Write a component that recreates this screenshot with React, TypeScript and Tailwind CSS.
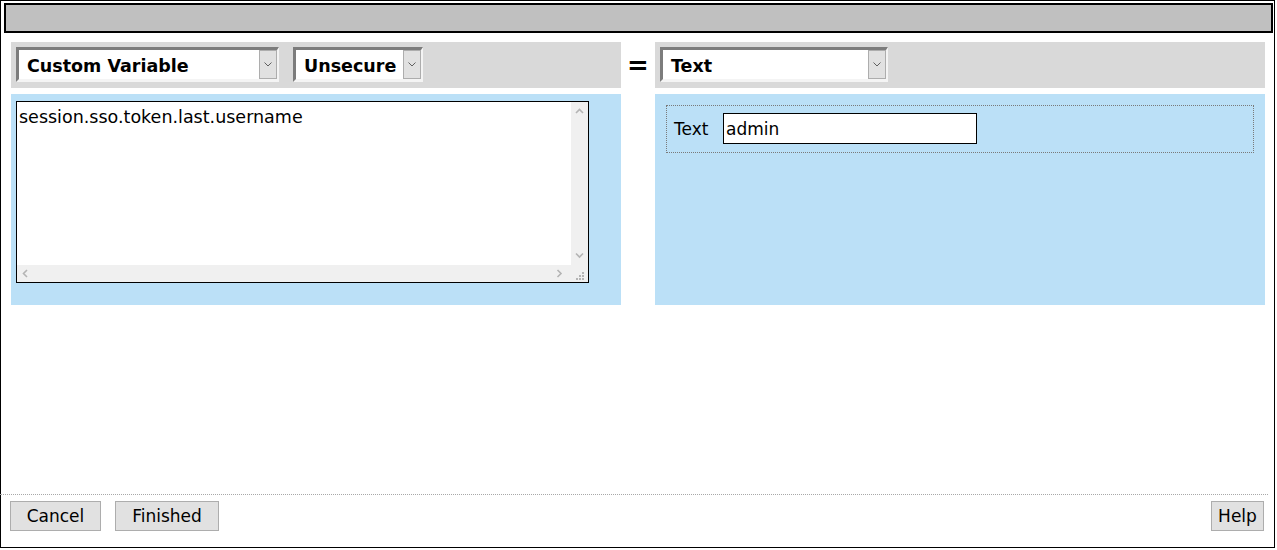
import React from 'react';

// Small down chevron used in the select buttons
function SelectChevron() {
  return (
    <svg width="8" height="5" viewBox="0 0 8 5" className="block">
      <polyline points="0.5,0.5 4,4 7.5,0.5" fill="none" stroke="#606060" strokeWidth="1" />
    </svg>
  );
}

function Select({ label, width }: { label: string; width: string }) {
  return (
    <div
      className={`${width} h-[35px] flex bg-white border-t-[3px] border-l-[3px] border-r-[2px] border-b-[3px] border-t-[#7c7c7c] border-l-[#7c7c7c] border-r-[#f4f4f4] border-b-[#f4f4f4]`}
    >
      <div className="flex-1 flex items-center pl-[8px] pt-[4px] text-[17.5px] font-bold text-black leading-none">
        {label}
      </div>
      <div className="w-[18px] bg-[#e1e1e1] border border-[#adadad] flex items-center justify-center">
        <SelectChevron />
      </div>
    </div>
  );
}

function ScrollArrow({ dir }: { dir: 'up' | 'down' | 'left' | 'right' }) {
  const pts = {
    up: '1,5 4.5,1.5 8,5',
    down: '1,1.5 4.5,5 8,1.5',
    left: '5,1 1.5,4.5 5,8',
    right: '1.5,1 5,4.5 1.5,8',
  }[dir];
  const vertical = dir === 'up' || dir === 'down';
  return (
    <svg width={vertical ? 9 : 7} height={vertical ? 7 : 9} viewBox={vertical ? '0 0 9 7' : '0 0 7 9'} className="block">
      <polyline points={pts} fill="none" stroke="#b4b4b4" strokeWidth="1.6" />
    </svg>
  );
}

function TextArea({ value }: { value: string }) {
  return (
    <div className="w-[573px] h-[182px] bg-white border border-black flex flex-col">
      <div className="flex-1 flex">
        <div className="flex-1 pl-[2px] pt-[4px] text-[17.5px] text-black leading-[22px]">{value}</div>
        <div className="w-[17px] bg-[#f0f0f0] flex flex-col items-center justify-between pt-[6px] pb-[6px]">
          <ScrollArrow dir="up" />
          <ScrollArrow dir="down" />
        </div>
      </div>
      <div className="h-[17px] flex">
        <div className="flex-1 bg-[#f0f0f0] flex items-center justify-between pl-[5px] pr-[8px]">
          <ScrollArrow dir="left" />
          <ScrollArrow dir="right" />
        </div>
        <div className="w-[17px] bg-[#f0f0f0] relative">
          {/* resize grip */}
          <svg width="17" height="17" viewBox="0 0 17 17" className="absolute inset-0">
            <rect x="11" y="7" width="2" height="2" fill="#b4b4b4" />
            <rect x="8" y="10" width="2" height="2" fill="#b4b4b4" />
            <rect x="11" y="10" width="2" height="2" fill="#b4b4b4" />
            <rect x="5" y="13" width="2" height="2" fill="#b4b4b4" />
            <rect x="8" y="13" width="2" height="2" fill="#b4b4b4" />
            <rect x="11" y="13" width="2" height="2" fill="#b4b4b4" />
          </svg>
        </div>
      </div>
    </div>
  );
}

function Button({ label, width }: { label: string; width: string }) {
  return (
    <button
      className={`${width} h-[30px] bg-[#e1e1e1] border border-[#adadad] text-[17px] text-black leading-none flex items-center justify-center pt-[1px]`}
    >
      {label}
    </button>
  );
}

export default function App() {
  return (
    <div className="w-[1277px] h-[550px] bg-white" style={{ fontFamily: '"DejaVu Sans", Verdana, sans-serif' }}>
      <div className="w-[1275px] h-[548px] border border-black flex flex-col">
        {/* title bar */}
        <div className="mt-[2px] ml-[3px] mr-[1px] h-[30px] border-2 border-black bg-[#c0c0c0]" />

        {/* condition editor */}
        <div className="mt-[9px] pl-[10px] flex">
          <div className="w-[610px] flex flex-col gap-[6px]">
            <div className="h-[46px] bg-[#d9d9d9] pt-[5px] pl-[5px] flex gap-[14px] items-start">
              <Select label="Custom Variable" width="w-[263px]" />
              <Select label="Unsecure" width="w-[130px]" />
            </div>
            <div className="h-[211px] bg-[#bbe0f7] pt-[7px] pl-[5px]">
              <TextArea value="session.sso.token.last.username" />
            </div>
          </div>

          <div className="w-[34px] h-[46px] flex items-center justify-center text-[26px] font-bold text-black leading-none">
            =
          </div>

          <div className="w-[610px] flex flex-col gap-[6px]">
            <div className="h-[46px] bg-[#d9d9d9] pt-[5px] pl-[5px] flex items-start">
              <Select label="Text" width="w-[228px]" />
            </div>
            <div className="h-[211px] bg-[#bbe0f7] p-[11px]">
              <div className="h-[48px] border border-dotted border-[#7a7a7a] pl-[7px] pt-[7px] flex items-start">
                <div className="w-[49px] h-[31px] flex items-center pt-[3px] text-[17px] text-black">Text</div>
                <div className="w-[254px] h-[31px] bg-white border border-black flex items-center pl-[2px] pt-[3px] text-[17px] text-black">
                  admin
                </div>
              </div>
            </div>
          </div>
        </div>

        <div className="flex-1" />

        {/* footer */}
        <div className="mr-[6px] -ml-[1px] border-t border-dotted border-[#a8a8a8]" />
        <div className="mt-[6px] mb-[16px] pl-[9px] pr-[10px] flex items-center">
          <div className="flex gap-[14px]">
            <Button label="Cancel" width="w-[91px]" />
            <Button label="Finished" width="w-[104px]" />
          </div>
          <div className="flex-1" />
          <Button label="Help" width="w-[53px]" />
        </div>
      </div>
    </div>
  );
}
